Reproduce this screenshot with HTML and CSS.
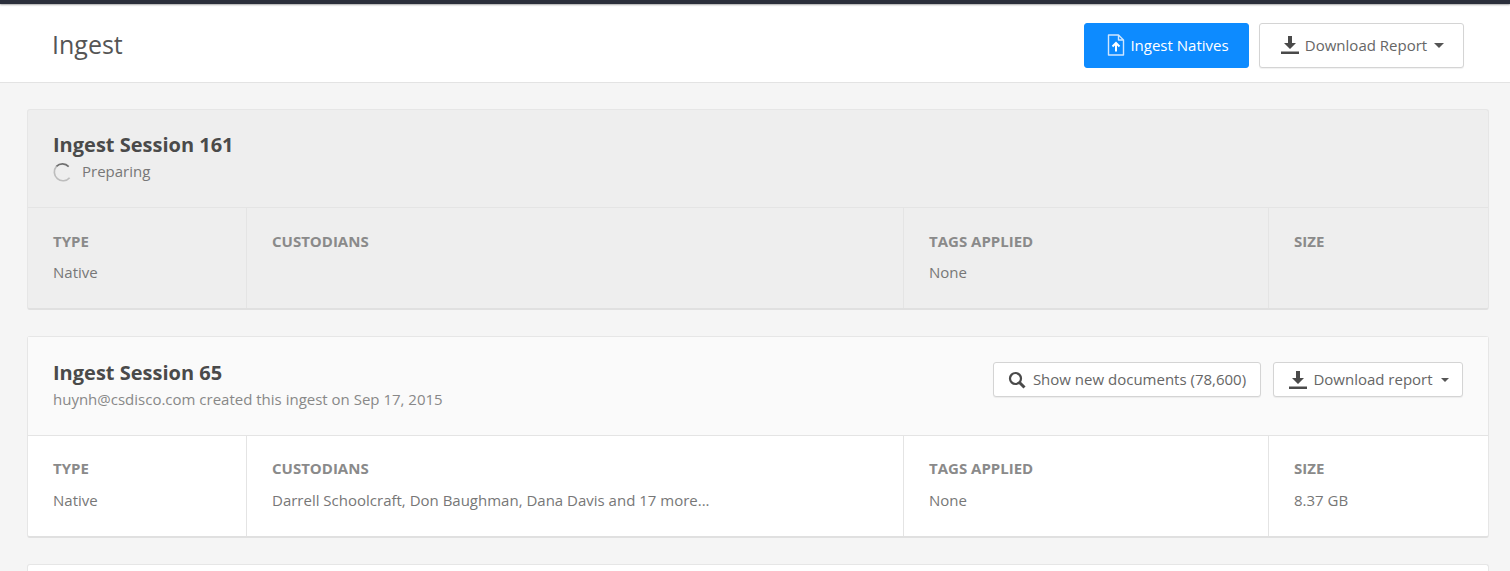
FILE: index.html
```html
<!DOCTYPE html>
<html lang="en">
<head>
<meta charset="utf-8">
<title>Ingest</title>
<link rel="stylesheet" href="styles.css">
</head>
<body>
<div class="topbar"></div>
<header class="header">
  <h1 class="title">Ingest</h1>
  <div class="actions">
    <button class="btn btn-primary">
      <svg viewBox="0 0 18 22" width="18" height="22"><path d="M1.500 1h10l5 5v15h-15z M11.500 1v5h5" fill="none" stroke="#cfe6ff" stroke-width="1.400" stroke-linejoin="round"/><path d="M9 17.500v-8M5.500 12.500 9 9l3.500 3.500" fill="none" stroke="#fff" stroke-width="2"/></svg>
      Ingest Natives
    </button>
    <button class="btn btn-large">
      <svg viewBox="0 0 18 18" width="18" height="18"><path d="M7 0h4v7h4l-6 6-6-6h4zM0 15.500h18V18H0z" fill="#4a4a4a"/></svg>
      Download Report <span class="caret"></span>
    </button>
  </div>
</header>
<main class="content">
  <section class="card card-pending">
    <div class="card-head card-head-pending">
      <div>
        <h2 class="card-title">Ingest Session 161</h2>
        <div class="status">
          <svg class="spinner" viewBox="0 0 20 20" width="19" height="19"><path d="M17.500 15.500A9 9 0 0 1 3.600 3.600" fill="none" stroke="#bdbdbd" stroke-width="1.800"/><path d="M3.600 3.600A9 9 0 0 1 16.500 3.800" fill="none" stroke="#707070" stroke-width="1.800"/></svg>
          Preparing
        </div>
      </div>
    </div>
    <div class="card-row">
      <div class="cell"><div class="label">TYPE</div><div class="value">Native</div></div>
      <div class="cell"><div class="label">CUSTODIANS</div></div>
      <div class="cell"><div class="label">TAGS APPLIED</div><div class="value">None</div></div>
      <div class="cell"><div class="label">SIZE</div></div>
    </div>
  </section>
  <section class="card card-done">
    <div class="card-head card-head-done">
      <div>
        <h2 class="card-title">Ingest Session 65</h2>
        <div class="meta">huynh@csdisco.com created this ingest on Sep 17, 2015</div>
      </div>
      <div class="card-actions">
        <button class="btn btn-small btn-search">
          <svg viewBox="0 0 18 18" width="18" height="18"><circle cx="7.500" cy="7.500" r="5.500" fill="none" stroke="#4a4a4a" stroke-width="2.200"/><path d="M11.500 11.500 16.500 16.500" stroke="#4a4a4a" stroke-width="3"/></svg>
          Show new documents (78,600)
        </button>
        <button class="btn btn-small btn-report">
          <svg viewBox="0 0 18 18" width="18" height="18"><path d="M7 0h4v7h4l-6 6-6-6h4zM0 15.500h18V18H0z" fill="#4a4a4a"/></svg>
          Download report <span class="caret caret-small"></span>
        </button>
      </div>
    </div>
    <div class="card-row">
      <div class="cell"><div class="label">TYPE</div><div class="value">Native</div></div>
      <div class="cell"><div class="label">CUSTODIANS</div><div class="value">Darrell Schoolcraft, Don Baughman, Dana Davis and 17 more...</div></div>
      <div class="cell"><div class="label">TAGS APPLIED</div><div class="value">None</div></div>
      <div class="cell"><div class="label">SIZE</div><div class="value">8.37 GB</div></div>
    </div>
  </section>
  <section class="card card-empty"></section>
</main>
</body>
</html>
```
FILE: styles.css
```css
* { box-sizing: border-box; }
html, body { margin: 0; height: 571px; overflow: hidden; }
body { background: #f5f5f5; font-family: "Open Sans", sans-serif; color: #777; }
.topbar { height: 4px; background: #2b2f3b; box-shadow: 0 1px 2px rgba(0,0,0,.35); position: relative; }
.header { height: 79px; background: #fff; border-bottom: 1px solid #e3e3e3; display: flex; align-items: center; justify-content: space-between; padding: 0 46px 0 52px; }
.title { margin: 1px 0 0; font-size: 25px; font-weight: 400; color: #555; line-height: 32px; }
.actions { display: flex; gap: 10px; align-items: center; margin-top: 4px; }
.btn { font-family: inherit; display: inline-flex; align-items: center; justify-content: center; background: #fff; border: 1px solid #d4d4d4; border-radius: 3px; color: #666; font-size: 15px; cursor: pointer; padding: 0; }
.btn-primary { width: 165px; height: 45px; background: #0d8bff; border-color: #0d8bff; color: #fff; gap: 5px; padding-left: 3px; }
.btn-large { width: 205px; height: 45px; gap: 6px; padding-left: 2px; box-shadow: 0 1px 1px rgba(0,0,0,.06); }
.btn-small { height: 35px; gap: 6px; padding-bottom: 2px; box-shadow: 0 1px 1px rgba(0,0,0,.06); }
.btn-small svg { margin-top: 2px; }
.btn-search { width: 268px; gap: 7px; }
.btn-report { width: 190px; padding-left: 2px; }
.caret { width: 0; height: 0; border-left: 5px solid transparent; border-right: 5px solid transparent; border-top: 5px solid #555; margin-left: 1px; }
.caret-small { border-left-width: 4px; border-right-width: 4px; border-top-width: 4px; margin: 2px 0 0 2px; }
.content { padding: 26px 21px 0 27px; display: flex; flex-direction: column; gap: 26px; }
.card { border: 1px solid #e6e6e6; border-bottom: 2px solid #e0e0e0; border-radius: 3px; background: #fff; flex: none; }
.card-pending { background: #eee; }
.card-empty { height: 40px; border-bottom: 0; }
.card-head { border-bottom: 1px solid #e4e4e4; display: flex; justify-content: space-between; padding: 21px 25px 0; }
.card-head-pending { height: 98px; }
.card-head-done { height: 99px; padding-top: 22px; background: #fafafa; }
.card-title { margin: 0; font-size: 20px; font-weight: 700; line-height: 27px; color: #4a4a4a; }
.status { display: flex; align-items: flex-start; gap: 10px; font-size: 15px; line-height: 20px; color: #777; margin-top: 3px; }
.spinner { margin-top: 2px; }
.meta { font-size: 15px; line-height: 20px; color: #888; margin-top: 3px; }
.card-actions { display: flex; gap: 12px; margin-top: 3px; }
.card-row { display: grid; grid-template-columns: 219px 657px 365px 1fr; height: 100px; }
.cell { padding: 23px 25px 0; border-right: 1px solid #e4e4e4; }
.cell:last-child { border-right: 0; }
.card-done .cell { padding-top: 22px; }
.card-done .value { margin-top: 12px; }
.label { font-size: 15px; font-weight: 700; line-height: 20px; color: #8a8a8a; }
.value { font-size: 15px; line-height: 20px; color: #777; margin-top: 11px; }
```
